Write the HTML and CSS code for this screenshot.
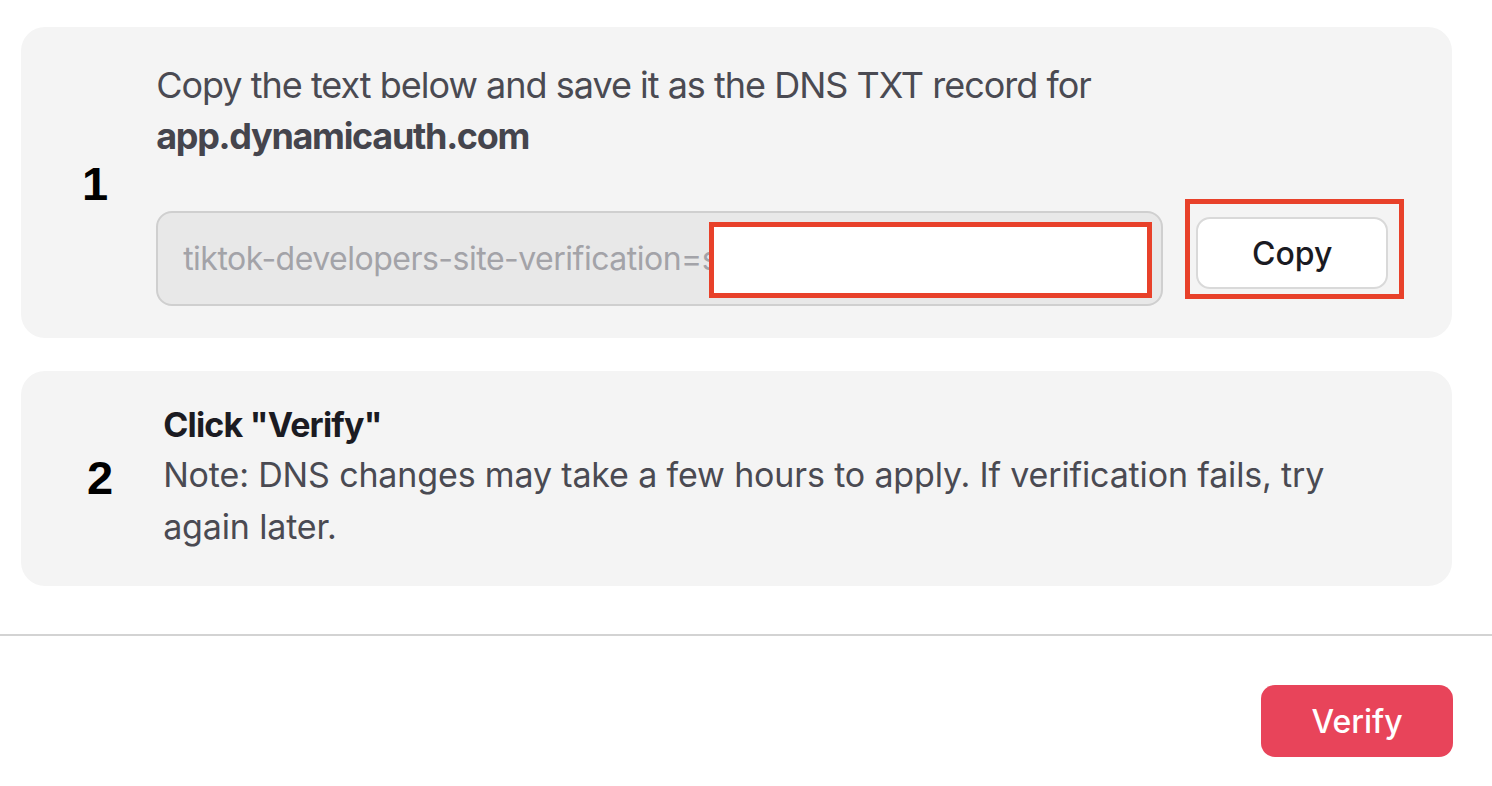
FILE: index.html
```html
<!DOCTYPE html>
<html lang="en">
<head>
    <meta charset="UTF-8">
    <meta name="viewport" content="width=device-width, initial-scale=1.0">
    <title>Verify domain</title>
    <link rel="stylesheet" href="styles.css">
</head>
<body>
    <main class="steps">
        <section class="step">
            <div class="step-num">1</div>
            <div class="step-body">
                <p class="step-text">Copy the text below and save it as the DNS TXT record for <strong>app.dynamicauth.com</strong></p>
                <div class="record-row">
                    <div class="record-field">
                        <input class="record-input" type="text" placeholder="tiktok-developers-site-verification=s" readonly>
                        <span class="mark mark-fill"></span>
                    </div>
                    <div class="copy-wrap">
                        <button class="copy-btn">Copy</button>
                        <span class="mark mark-copy"></span>
                    </div>
                </div>
            </div>
        </section>

        <section class="step step-two">
            <div class="step-num">2</div>
            <div class="step-body">
                <h3 class="step-title">Click "Verify"</h3>
                <p class="step-note">Note: DNS changes may take a few hours to apply. If verification fails, try again later.</p>
            </div>
        </section>
    </main>

    <footer class="actions">
        <button class="verify-btn">Verify</button>
    </footer>
</body>
</html>
```

FILE: styles.css
```css
body {
    margin: 0;
    background: #fff;
    font-family: 'Inter', 'Roboto', sans-serif;
}

.steps {
    padding: 27px 40px 48px 21px;
    display: flex;
    flex-direction: column;
    gap: 33px;
}

.step {
    display: flex;
    align-items: center;
    gap: 48px;
    background-color: #f4f4f4;
    border-radius: 24px;
    padding: 33px 47px 32px 61px;
}

.step-two {
    padding: 30px 47px 33px 66px;
    gap: 50px;
}

.step-num {
    font-family: 'Liberation Sans', Arial, sans-serif;
    font-weight: bold;
    font-size: 47px;
    color: #000;
    flex-shrink: 0;
}

.step-body {
    flex: 1;
}

.step-text {
    margin: 0;
    font-size: 36px;
    line-height: 51px;
    color: #4a4a52;
    letter-spacing: -1px;
    max-width: 960px;
}

.step-text strong {
    display: block;
    font-weight: 700;
    color: #45454d;
    letter-spacing: -1.3px;
}

.record-row {
    display: flex;
    align-items: flex-start;
    gap: 33px;
    margin-top: 49px;
}

.record-field {
    position: relative;
    width: 1007px;
}

.record-input {
    box-sizing: border-box;
    width: 100%;
    height: 95px;
    padding: 0 25px;
    font-family: inherit;
    font-size: 32px;
    letter-spacing: -0.5px;
    background-color: #e8e8e8;
    border: 2px solid #cfcfcf;
    border-radius: 16px;
    outline: none;
}

.record-input::placeholder {
    color: #a3a3a8;
}

.copy-wrap {
    position: relative;
    margin-top: 6px;
}

.copy-btn {
    box-sizing: border-box;
    width: 192px;
    height: 72px;
    background-color: #fff;
    border: 2px solid #d9d9d9;
    border-radius: 14px;
    font-family: inherit;
    font-size: 32px;
    font-weight: 500;
    color: #1a1a22;
    cursor: pointer;
}

/* red annotation boxes from the screenshot */
.mark {
    position: absolute;
    border: 5px solid #e8412a;
    box-sizing: border-box;
    pointer-events: none;
}

.mark-fill {
    left: 553px;
    top: 11px;
    width: 443px;
    height: 76px;
    background-color: #fff;
}

.mark-copy {
    left: -11px;
    top: -18px;
    width: 219px;
    height: 100px;
}

.step-title {
    margin: 0;
    font-size: 34px;
    line-height: 48px;
    font-weight: 700;
    color: #1b1b22;
    letter-spacing: -0.8px;
}

.step-note {
    margin: 0;
    font-size: 34px;
    line-height: 52px;
    color: #4a4a52;
    letter-spacing: -0.15px;
    max-width: 1180px;
}

.actions {
    border-top: 2px solid #d3d3d3;
    padding: 49px 39px 30px 0;
    display: flex;
    justify-content: flex-end;
}

.verify-btn {
    width: 192px;
    height: 72px;
    background-color: #e8445a;
    border: none;
    border-radius: 14px;
    color: #fff;
    font-family: inherit;
    font-size: 32px;
    font-weight: 500;
    cursor: pointer;
}
```
